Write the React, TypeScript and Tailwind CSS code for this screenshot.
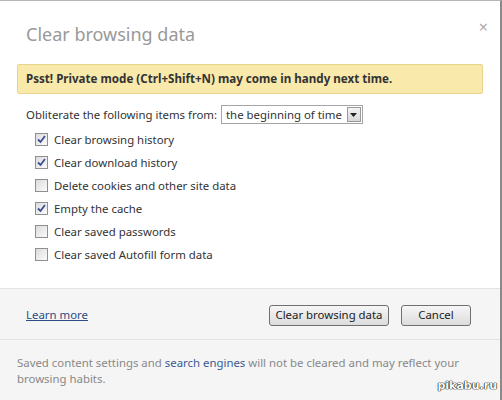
import React from "react";

const items = [
  { label: "Clear browsing history", checked: true },
  { label: "Clear download history", checked: true },
  { label: "Delete cookies and other site data", checked: false },
  { label: "Empty the cache", checked: true },
  { label: "Clear saved passwords", checked: false },
  { label: "Clear saved Autofill form data", checked: false },
];

const Checkbox = ({ checked }: { checked: boolean }) => (
  <span className="relative flex h-[13px] w-[13px] items-center justify-center border border-[#8f8f8f] bg-gradient-to-br from-[#dcdcdc] to-[#fbfbfb]">
    {checked && (
      <svg width="9" height="9" viewBox="0 0 9 9" className="absolute">
        <path d="M1 4.5 L3.5 7 L8 1" fill="none" stroke="#3b4f8f" strokeWidth="1.8" />
      </svg>
    )}
  </span>
);

export default function App() {
  return (
    <div
      className="relative flex h-[400px] w-[502px] flex-col overflow-hidden border-t border-r-2 border-t-[#b5b5b5] border-r-[#8a8a8a] bg-white text-[11.4px] text-[#333]"
      style={{ fontFamily: '"Noto Sans", "Open Sans", sans-serif' }}
    >
      <div className="flex h-[287px] flex-col">
        <div className="flex items-start justify-between pl-[26px] pr-[12px] pt-[18px]">
          <h1 className="text-[18px] font-normal leading-[30px] text-[#999]">Clear browsing data</h1>
          <span className="text-[16px] leading-[16px] text-[#aaa]">×</span>
        </div>
        <div className="mx-[17px] mt-[15px] flex h-[30px] items-center rounded-[2px] border border-[#e8d48d] bg-[#f9e9ab] pl-[8px] text-[11.6px] font-bold text-[#333]">
          Psst! Private mode (Ctrl+Shift+N) may come in handy next time.
        </div>
        <div className="mt-[11px] flex items-center pl-[26px]">
          <span>Obliterate the following items from:</span>
          <span className="ml-[4px] flex h-[19px] items-center border border-[#a5a5a5] pl-[4px] pr-[1px]">
            the beginning of time
            <span className="ml-[5px] flex h-[15px] w-[14px] items-center justify-center border border-[#9a9a9a] bg-gradient-to-b from-[#f4f4f4] to-[#d8d8d8]">
              <svg width="7" height="4" viewBox="0 0 7 4">
                <path d="M0 0 H7 L3.5 4 Z" fill="#222" />
              </svg>
            </span>
          </span>
        </div>
        <div className="mt-[4px] flex flex-col pl-[35px]">
          {items.map((item, i) => (
            <label key={i} className="flex h-[23px] items-center gap-[6px]">
              <Checkbox checked={item.checked} />
              <span>{item.label}</span>
            </label>
          ))}
        </div>
      </div>
      <div className="flex flex-1 flex-col border-t border-[#e3e3e3] bg-[#f5f5f5]">
        <div className="flex h-[51px] items-center justify-between border-b border-[#e3e3e3] pl-[26px] pr-[29px] pt-[2px]">
          <a className="text-[#2b4c86] underline">Learn more</a>
          <div className="flex gap-[12px]">
            <button className="h-[21px] w-[120px] rounded-[3px] border border-[#707070] bg-gradient-to-b from-[#f6f6f6] to-[#dcdcdc] text-[11.4px] text-[#222]">
              Clear browsing data
            </button>
            <button className="h-[21px] w-[70px] rounded-[3px] border border-[#707070] bg-gradient-to-b from-[#f6f6f6] to-[#dcdcdc] text-[11.4px] text-[#222]">
              Cancel
            </button>
          </div>
        </div>
        <div className="flex flex-col px-[17px] pt-[15px] leading-[16px] text-[#888]">
          <div className="flex whitespace-pre">
            <span>Saved content settings and </span>
            <span className="text-[#3a5a91]">search engines</span>
            <span> will not be cleared and may reflect your</span>
          </div>
          <span className="w-fit">browsing habits.</span>
        </div>
      </div>
      <span
        className="absolute bottom-[6px] right-[3px] text-[11px] font-bold text-white [text-shadow:0_0_1px_#000,0_0_1px_#000,0_0_1px_#000]"
        style={{ fontFamily: '"DejaVu Sans", sans-serif' }}
      >
        pikabu.ru
      </span>
    </div>
  );
}
